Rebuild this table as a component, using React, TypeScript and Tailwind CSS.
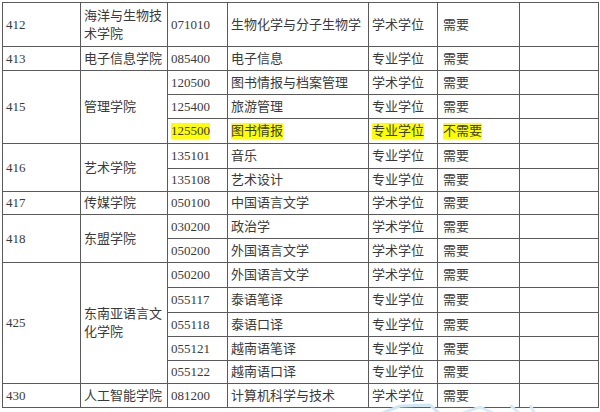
import React from "react";

type Cell = { text: string; rowSpan?: number; hl?: boolean };
type Row = { h: number; cells: Cell[] };

const rows: Row[] = [
  { h: 44, cells: [{ text: "412" }, { text: "海洋与生物技术学院" }, { text: "071010" }, { text: "生物化学与分子生物学" }, { text: "学术学位" }, { text: "需要" }, { text: "" }] },
  { h: 24, cells: [{ text: "413" }, { text: "电子信息学院" }, { text: "085400" }, { text: "电子信息" }, { text: "专业学位" }, { text: "需要" }, { text: "" }] },
  { h: 24, cells: [{ text: "415", rowSpan: 3 }, { text: "管理学院", rowSpan: 3 }, { text: "120500" }, { text: "图书情报与档案管理" }, { text: "学术学位" }, { text: "需要" }, { text: "" }] },
  { h: 24, cells: [{ text: "125400" }, { text: "旅游管理" }, { text: "专业学位" }, { text: "需要" }, { text: "" }] },
  { h: 25, cells: [{ text: "125500", hl: true }, { text: "图书情报", hl: true }, { text: "专业学位", hl: true }, { text: "不需要", hl: true }, { text: "" }] },
  { h: 25, cells: [{ text: "416", rowSpan: 2 }, { text: "艺术学院", rowSpan: 2 }, { text: "135101" }, { text: "音乐" }, { text: "专业学位" }, { text: "需要" }, { text: "" }] },
  { h: 23, cells: [{ text: "135108" }, { text: "艺术设计" }, { text: "专业学位" }, { text: "需要" }, { text: "" }] },
  { h: 23, cells: [{ text: "417" }, { text: "传媒学院" }, { text: "050100" }, { text: "中国语言文学" }, { text: "学术学位" }, { text: "需要" }, { text: "" }] },
  { h: 24, cells: [{ text: "418", rowSpan: 2 }, { text: "东盟学院", rowSpan: 2 }, { text: "030200" }, { text: "政治学" }, { text: "学术学位" }, { text: "需要" }, { text: "" }] },
  { h: 24, cells: [{ text: "050200" }, { text: "外国语言文学" }, { text: "学术学位" }, { text: "需要" }, { text: "" }] },
  { h: 25, cells: [{ text: "425", rowSpan: 5 }, { text: "东南亚语言文化学院", rowSpan: 5 }, { text: "050200" }, { text: "外国语言文学" }, { text: "学术学位" }, { text: "需要" }, { text: "" }] },
  { h: 25, cells: [{ text: "055117" }, { text: "泰语笔译" }, { text: "专业学位" }, { text: "需要" }, { text: "" }] },
  { h: 24, cells: [{ text: "055118" }, { text: "泰语口译" }, { text: "专业学位" }, { text: "需要" }, { text: "" }] },
  { h: 24, cells: [{ text: "055121" }, { text: "越南语笔译" }, { text: "专业学位" }, { text: "需要" }, { text: "" }] },
  { h: 23, cells: [{ text: "055122" }, { text: "越南语口译" }, { text: "专业学位" }, { text: "需要" }, { text: "" }] },
  { h: 24, cells: [{ text: "430" }, { text: "人工智能学院" }, { text: "081200" }, { text: "计算机科学与技术" }, { text: "学术学位" }, { text: "需要" }, { text: "" }] },
];

export default function App() {
  return (
    <div
      className="relative w-[600px] h-[412px] overflow-hidden bg-white pt-[2px] pl-[2px] text-[13px] leading-[18px] text-[#3a3a3a]"
      style={{ fontFamily: '"Liberation Serif", "Noto Sans CJK SC", serif' }}
    >
      <table className="table-fixed border-collapse w-[596px]">
        <colgroup>
          <col className="w-[78px]" />
          <col className="w-[87px]" />
          <col className="w-[60px]" />
          <col className="w-[141px]" />
          <col className="w-[69px]" />
          <col className="w-[82px]" />
          <col className="w-[79px]" />
        </colgroup>
        <tbody>
          {rows.map((r, i) => (
            <tr key={i} style={{ height: r.h }}>
              {r.cells.map((c, j) => {
                const isNeed = j === r.cells.length - 2;
                return (
                  <td
                    key={j}
                    rowSpan={c.rowSpan}
                    className={
                      "border border-[#5a5a5a] py-0 align-middle " +
                      (isNeed ? "pl-[5px] pr-[3px]" : "px-[3px]")
                    }
                  >
                    {c.hl ? (
                      <span className="bg-[#ffff00] leading-[16px] inline-block">{c.text}</span>
                    ) : (
                      c.text
                    )}
                  </td>
                );
              })}
            </tr>
          ))}
        </tbody>
      </table>
      {/* faint watermark under the table */}
      <svg className="absolute left-[370px] top-[402px]" width="180" height="12" viewBox="0 0 180 12">
        <path d="M10 12 L30 4 L60 3 L70 12" fill="none" stroke="#cfe6f7" strokeWidth="3" />
        <path d="M90 12 L110 5 L125 12" fill="none" stroke="#d6ebf9" strokeWidth="3" />
        <path d="M140 3 L150 12 M160 3 L165 12" fill="none" stroke="#d6ebf9" strokeWidth="3" />
      </svg>
    </div>
  );
}
